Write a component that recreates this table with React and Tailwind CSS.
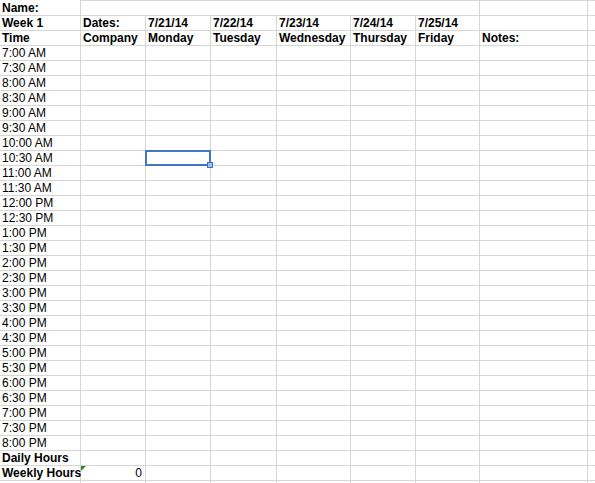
import React from "react";

const times = [];
for (let h = 7; h <= 20; h++) {
  for (const m of ["00", "30"]) {
    if (h === 20 && m === "30") continue;
    const hh = h > 12 ? h - 12 : h;
    const ap = h >= 12 ? "PM" : "AM";
    times.push(`${hh}:${m} ${ap}`);
  }
}

const COLS = 9;

function Cell({ col, children, className = "", top = false, extra }) {
  return (
    <div
      className={
        "relative h-[15px] border-b border-[#d6d6d6] pl-[2px] pr-[3px] leading-[14px] whitespace-nowrap " +
        (col > 0 ? "border-l " : "") +
        (top ? "h-[16px] border-t " : "") +
        className
      }
    >
      {children}
      {extra}
    </div>
  );
}

export default function App() {
  const headerDates = ["Week 1", "Dates:", "7/21/14", "7/22/14", "7/23/14", "7/24/14", "7/25/14", "", ""];
  const headerDays = ["Time", "Company", "Monday", "Tuesday", "Wednesday", "Thursday", "Friday", "Notes:", ""];

  return (
    <div
      className="w-[595px] h-[483px] overflow-hidden bg-white text-black text-[12px]"
      style={{ fontFamily: '"Liberation Sans", Arial, sans-serif' }}
    >
      <div className="grid grid-cols-[80px_65px_65px_66px_74px_65px_64px_108px_1fr]">
        {/* Row 0 */}
        <Cell col={0} top className="font-bold !border-t-transparent">Name:</Cell>
        <div className="col-span-6 h-[16px] border-t border-b border-l border-[#d6d6d6]" />
        <Cell col={7} top />
        <Cell col={8} top />

        {/* Row 1 */}
        {headerDates.map((t, i) => (
          <Cell key={"d" + i} col={i} className="font-bold">{t}</Cell>
        ))}

        {/* Row 2 */}
        {headerDays.map((t, i) => (
          <Cell key={"w" + i} col={i} className="font-bold">{t}</Cell>
        ))}

        {/* Time rows */}
        {times.map((t) =>
          Array.from({ length: COLS }).map((_, i) => (
            <Cell
              key={t + i}
              col={i}
              extra={
                t === "10:30 AM" && i === 2 ? (
                  <>
                    <div className="absolute -top-px -left-px w-[66px] h-[16px] border-2 border-[#4376c8] z-10" />
                    <div className="absolute left-[61px] top-[11px] w-[6px] h-[6px] border border-[#3f6fc0] bg-[#9dbef0] z-20" />
                  </>
                ) : null
              }
            >
              {i === 0 ? t : ""}
            </Cell>
          ))
        )}

        {/* Daily Hours */}
        {Array.from({ length: COLS }).map((_, i) => (
          <Cell key={"dh" + i} col={i} className="font-bold">{i === 0 ? "Daily Hours" : ""}</Cell>
        ))}

        {/* Weekly Hours */}
        {Array.from({ length: COLS }).map((_, i) => (
          <Cell
            key={"wh" + i}
            col={i}
            className={i === 0 ? "font-bold overflow-visible z-10" : i === 1 ? "text-right" : ""}
            extra={
              i === 1 ? (
                <svg className="absolute left-0 top-0" width="5" height="5" viewBox="0 0 5 5">
                  <polygon points="0,0 5,0 0,5" fill="#2a8a2a" />
                </svg>
              ) : null
            }
          >
            {i === 0 ? "Weekly Hours" : i === 1 ? "0" : ""}
          </Cell>
        ))}

        {/* partial row */}
        {Array.from({ length: COLS }).map((_, i) => (
          <Cell key={"x" + i} col={i} />
        ))}
      </div>
    </div>
  );
}
